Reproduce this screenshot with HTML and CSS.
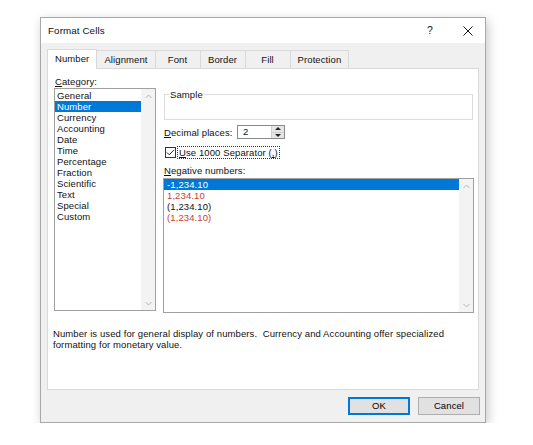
FILE: index.html
```html
<!DOCTYPE html>
<html>
<head>
<meta charset="utf-8">
<link rel="stylesheet" href="styles.css">
</head>
<body>
<div class="dialog">
  <div class="titlebar">
    <span class="title">Format Cells</span>
    <span class="help">?</span>
    <span class="close"><svg width="10" height="10" viewBox="0 0 10 10"><path d="M0.5 0.5 L9.5 9.5 M9.5 0.5 L0.5 9.5" stroke="#1a1a1a" stroke-width="1" fill="none"/></svg></span>
  </div>
  <div class="body">
    <div class="tabs">
      <div class="tab active">Number</div>
      <div class="tab">Alignment</div>
      <div class="tab">Font</div>
      <div class="tab">Border</div>
      <div class="tab">Fill</div>
      <div class="tab">Protection</div>
    </div>
    <div class="panel">
      <div class="left">
        <div class="label"><u>C</u>ategory:</div>
        <div class="listbox cat">
          <div class="items">
            <div class="item">General</div>
            <div class="item sel">Number</div>
            <div class="item">Currency</div>
            <div class="item">Accounting</div>
            <div class="item">Date</div>
            <div class="item">Time</div>
            <div class="item">Percentage</div>
            <div class="item">Fraction</div>
            <div class="item">Scientific</div>
            <div class="item">Text</div>
            <div class="item">Special</div>
            <div class="item">Custom</div>
          </div>
          <div class="vscroll">
            <span class="arrow"><svg width="7" height="5" viewBox="0 0 7 5"><path d="M0.5 4 L3.5 1 L6.5 4" stroke="#b4b4b4" fill="none"/></svg></span>
            <span class="arrow"><svg width="7" height="5" viewBox="0 0 7 5"><path d="M0.5 1 L3.5 4 L6.5 1" stroke="#b4b4b4" fill="none"/></svg></span>
          </div>
        </div>
      </div>
      <div class="right">
        <fieldset class="sample">
          <legend>Sample</legend>
          <div class="sample-body"></div>
        </fieldset>
        <div class="decimal">
          <span class="dlabel"><u>D</u>ecimal places:</span>
          <div class="spin">
            <span class="val">2</span>
            <div class="spin-btns">
              <span class="sb"><span class="tri-up"></span></span>
              <span class="sb"><span class="tri-down"></span></span>
            </div>
          </div>
        </div>
        <div class="check">
          <span class="cb"><svg width="9" height="9" viewBox="0 0 9 9"><path d="M1 4.5 L3.3 6.8 L8 1.8" stroke="#222" stroke-width="1" fill="none"/></svg></span>
          <span class="focus"><u>U</u>se 1000 Separator (<u>,</u>)</span>
        </div>
        <div class="label neg"><u>N</u>egative numbers:</div>
        <div class="listbox neglist">
          <div class="items">
            <div class="item sel">-1,234.10</div>
            <div class="item red">1,234.10</div>
            <div class="item">(1,234.10)</div>
            <div class="item red">(1,234.10)</div>
          </div>
          <div class="vscroll">
            <span class="arrow"><svg width="7" height="5" viewBox="0 0 7 5"><path d="M0.5 4 L3.5 1 L6.5 4" stroke="#b4b4b4" fill="none"/></svg></span>
            <span class="arrow"><svg width="7" height="5" viewBox="0 0 7 5"><path d="M0.5 1 L3.5 4 L6.5 1" stroke="#b4b4b4" fill="none"/></svg></span>
          </div>
        </div>
      </div>
      <p class="desc">Number is used for general display of numbers.&nbsp; Currency and Accounting offer specialized<br>formatting for monetary value.</p>
    </div>
    <div class="buttons">
      <button class="btn default">OK</button>
      <button class="btn">Cancel</button>
    </div>
  </div>
</div>
</body>
</html>
```
FILE: styles.css
```css
body {
  margin: 0;
  background: #fff;
  font-family: "Liberation Sans", Arial, sans-serif;
  font-size: 9.5px;
  letter-spacing: 0.1px;
  line-height: 11px;
  color: #111;
}

.dialog {
  margin: 17px 0 0 40px;
  width: 446px;
  box-sizing: border-box;
  border: 1px solid #a8a8a8;
  background: #f0f0f0;
  box-shadow: 2px 3px 10px rgba(0, 0, 0, 0.22);
}

.titlebar {
  height: 25px;
  background: #fff;
  display: flex;
  align-items: center;
  padding-left: 7px;
}

.title {
  font-size: 9.8px;
}

.help {
  margin-left: auto;
  width: 8px;
  text-align: center;
  font-size: 10.5px;
  margin-right: 29px;
  color: #222;
}

.close {
  width: 10px;
  height: 10px;
  margin-right: 12px;
  display: flex;
}

.body {
  padding: 6px 6px 7px 6px;
}

.tabs {
  display: flex;
  align-items: flex-start;
  height: 20px;
  margin-bottom: -1px;
}

.tab {
  height: 18px;
  margin-top: 1px;
  box-sizing: border-box;
  padding: 0 7px;
  min-width: 45px;
  border-top: 1px solid #d9d9d9;
  border-right: 1px solid #d9d9d9;
  line-height: 17px;
  text-align: center;
  background: #f0f0f0;
}

.tab.active {
  height: 20px;
  margin-top: 0;
  padding: 0 7px;
  background: #fff;
  border-left: 1px solid #d9d9d9;
  position: relative;
  z-index: 1;
}

.panel {
  height: 322px;
  box-sizing: border-box;
  border: 1px solid #d9d9d9;
  background: #fff;
  display: grid;
  grid-template-columns: 102px 311px;
  column-gap: 7px;
  align-content: start;
  align-items: start;
  padding: 7px 4px 0 6px;
}

.label {
  margin-left: 1px;
  line-height: 11px;
}

.left .label {
  margin-bottom: 1px;
}

.listbox {
  border: 1px solid #a0a0a0;
  display: flex;
  box-sizing: border-box;
}

.cat {
  height: 223px;
}

.items {
  flex: 1;
}

.cat .items {
  padding-top: 1px;
}

.item {
  height: 11px;
  line-height: 11px;
  white-space: nowrap;
}

.cat .item {
  padding-left: 2px;
}

.neglist .item {
  padding-left: 3px;
}

.item.sel {
  background: #0078d7;
  color: #fff;
}

.item.red {
  color: #c8412f;
}

.vscroll {
  width: 14px;
  background: #f3f3f3;
  display: flex;
  flex-direction: column;
  justify-content: space-between;
}

.arrow {
  height: 14px;
  display: flex;
  align-items: center;
  justify-content: center;
}

.right {
  display: flex;
  flex-direction: column;
}

.sample {
  margin: 13px 1px 0 1px;
  padding: 0;
  border: 1px solid #dcdcdc;
  min-width: 0;
}

.sample legend {
  padding: 0 1px;
  margin-left: 4px;
  line-height: 11px;
}

.sample-body {
  height: 19px;
}

.decimal {
  display: flex;
  align-items: center;
  margin-top: 5px;
  height: 14px;
}

.dlabel {
  width: 73px;
  margin-left: 1px;
}

.spin {
  width: 48px;
  height: 14px;
  box-sizing: border-box;
  border: 1px solid #8a8a8a;
  display: flex;
}

.spin .val {
  flex: 1;
  padding-left: 5px;
  line-height: 12px;
}

.spin-btns {
  width: 12px;
  display: flex;
  flex-direction: column;
  background: #e6e6e6;
  border-left: 1px solid #cfcfcf;
}

.sb {
  flex: 1;
  display: flex;
  align-items: center;
  justify-content: center;
}

.sb + .sb {
  border-top: 1px solid #cfcfcf;
}

.tri-up {
  width: 0;
  height: 0;
  border-left: 3px solid transparent;
  border-right: 3px solid transparent;
  border-bottom: 3px solid #222;
}

.tri-down {
  width: 0;
  height: 0;
  border-left: 3px solid transparent;
  border-right: 3px solid transparent;
  border-top: 3px solid #222;
}

.check {
  display: flex;
  align-items: center;
  margin-top: 8px;
  height: 11px;
}

.cb {
  width: 11px;
  height: 11px;
  box-sizing: border-box;
  border: 1px solid #333;
  margin-left: 2px;
  display: flex;
}

.focus {
  margin-left: 2px;
  outline: 1px dotted #333;
  padding: 0 1px;
  line-height: 11px;
}

.label.neg {
  margin-top: 7px;
}

.neglist {
  margin-top: 2px;
  height: 135px;
}

.desc {
  grid-column: 1 / -1;
  margin: 15px 0 0 -1px;
  line-height: 11px;
}

.buttons {
  display: flex;
  justify-content: flex-end;
  gap: 8px;
  margin-top: 7px;
  margin-right: -1px;
}

.btn {
  width: 62px;
  height: 18px;
  box-sizing: border-box;
  border: 1px solid #adadad;
  background: #e1e1e1;
  font: inherit;
  letter-spacing: inherit;
  color: #000;
  padding: 0;
  line-height: 16px;
}

.btn.default {
  border-color: #0078d7;
  box-shadow: inset 0 0 0 1px #0078d7;
}
```
